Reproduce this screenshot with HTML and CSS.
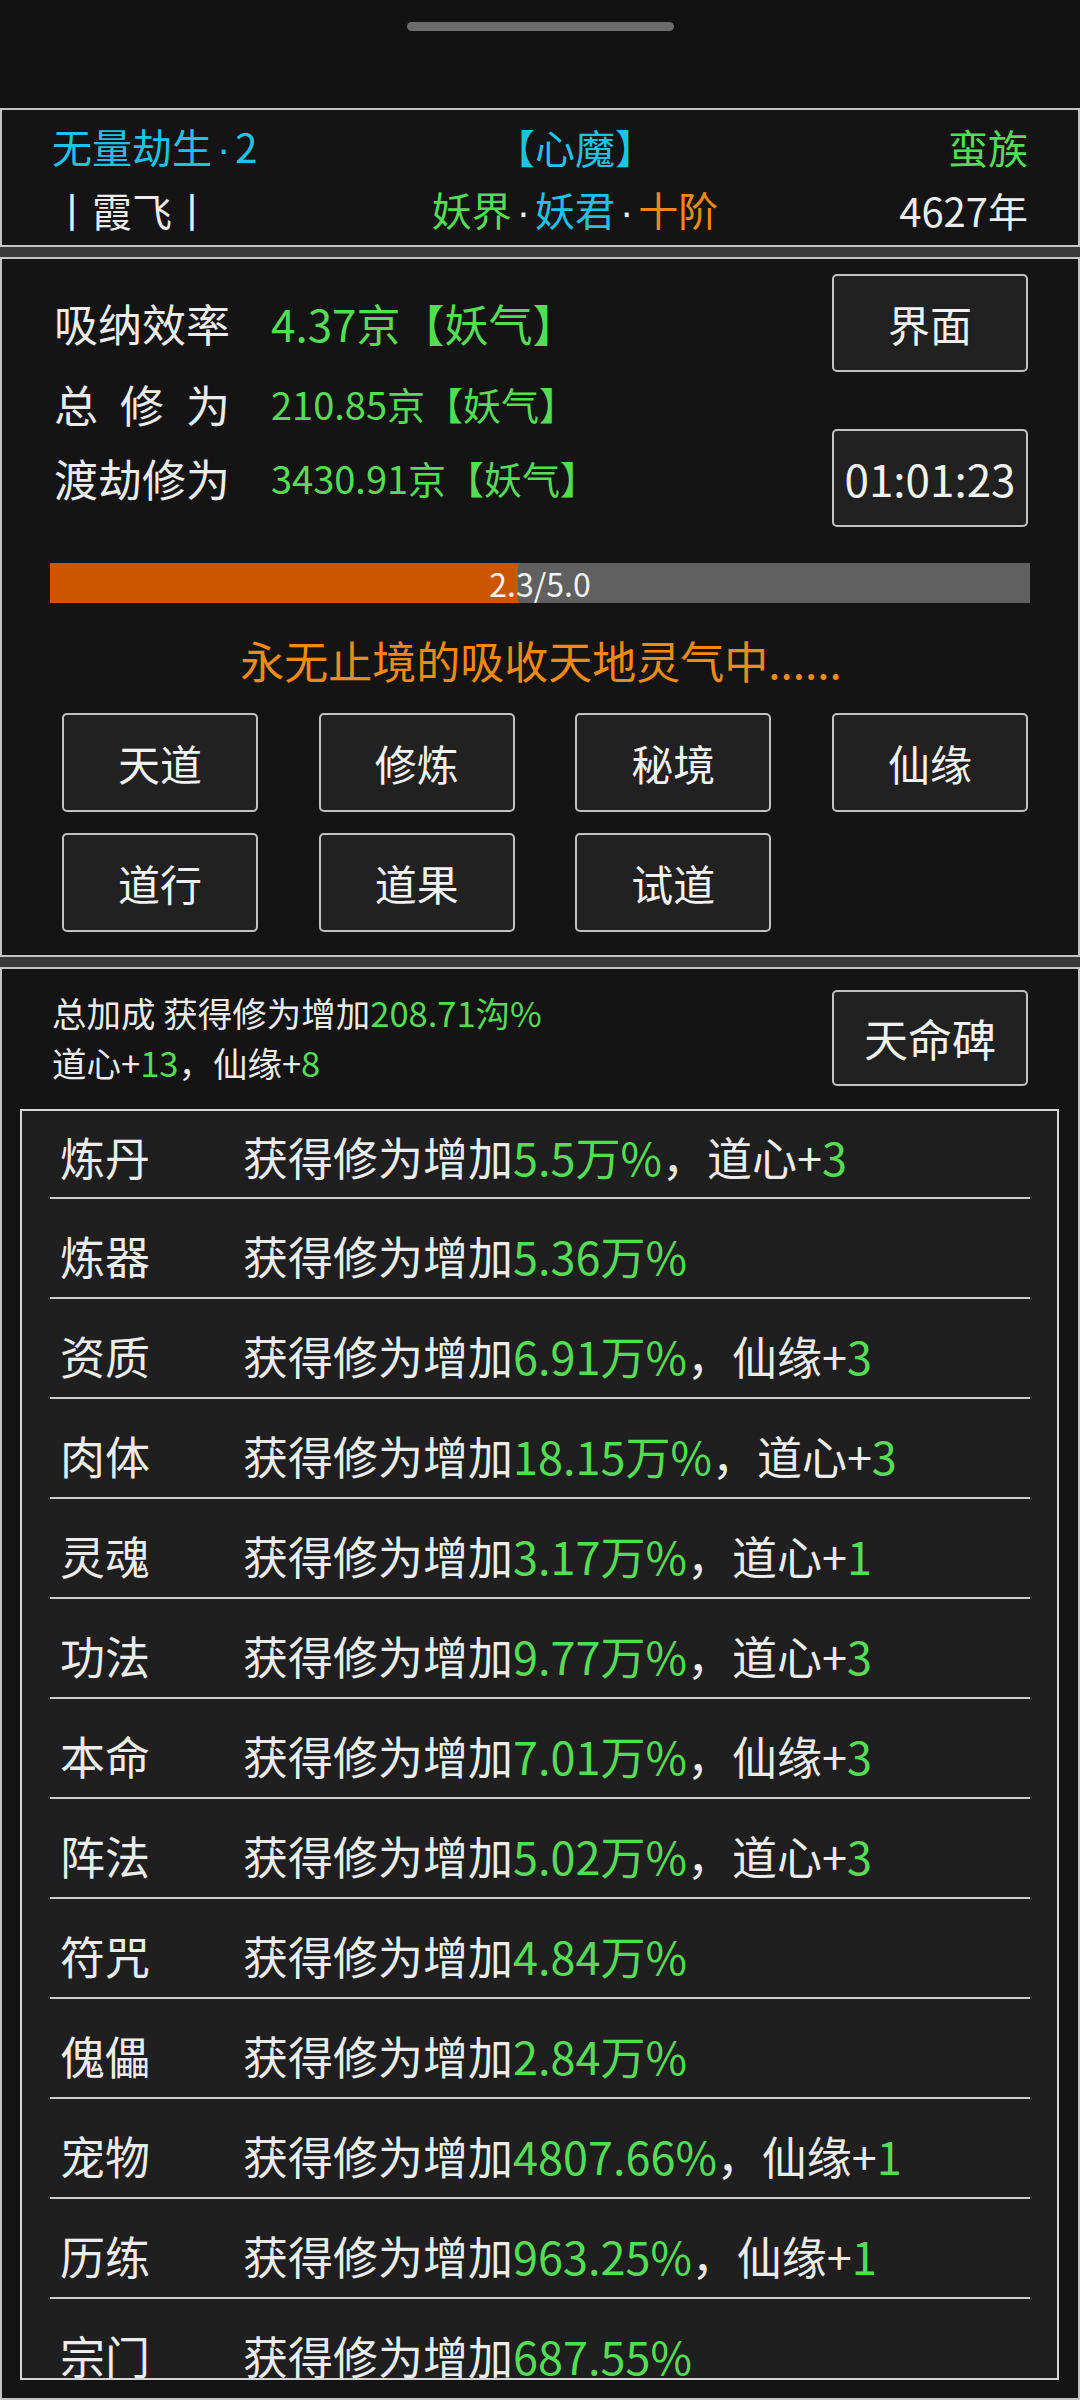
FILE: index.html
```html
<!DOCTYPE html>
<html lang="zh-CN">
<head>
<meta charset="utf-8">
<title>修仙</title>
<link rel="stylesheet" href="styles.css">
</head>
<body>
<div class="app">
  <div class="topbar"><div class="handle"></div></div>

  <section class="panel panel-info">
    <div class="info-grid">
      <div class="c-left cyan">无量劫生<span class="dot">·</span>2</div>
      <div class="c-mid cyan">【心魔】</div>
      <div class="c-right green">蛮族</div>
      <div class="c-left">丨霞飞丨</div>
      <div class="c-mid"><span class="green">妖界</span><span class="dot">·</span><span class="cyan">妖君</span><span class="dot">·</span><span class="orange">十阶</span></div>
      <div class="c-right">4627年</div>
    </div>
  </section>
  <div class="band"></div>

  <section class="panel panel-main">
    <div class="stats">
      <div class="stat-label">吸纳效率</div>
      <div class="stat-val big green">4.37京【妖气】</div>
      <div class="btn">界面</div>
      <div class="stat-label just mid">总 修 为</div>
      <div class="stat-val green mid">210.85京【妖气】</div>
      <div></div>
      <div class="stat-label">渡劫修为</div>
      <div class="stat-val green">3430.91京【妖气】</div>
      <div class="btn btn-time">01:01:23</div>
    </div>
    <div class="progress">
      <div class="progress-fill" style="width: 47.8%"></div>
      <div class="progress-text">2.3/5.0</div>
    </div>
    <div class="status orange">永无止境的吸收天地灵气中......</div>
    <div class="actions">
      <div class="btn">天道</div>
      <div class="btn">修炼</div>
      <div class="btn">秘境</div>
      <div class="btn">仙缘</div>
      <div class="btn">道行</div>
      <div class="btn">道果</div>
      <div class="btn">试道</div>
    </div>
  </section>
  <div class="band"></div>

  <section class="panel panel-bonus">
    <div class="bonus-head">
      <div class="bonus-text">
        <div>总加成 获得修为增加<span class="green">208.71沟%</span></div>
        <div>道心+<span class="green">13</span>，仙缘+<span class="green">8</span></div>
      </div>
      <div class="btn btn-tm">天命碑</div>
    </div>
    <div class="list">
      <div class="row"><div class="row-name">炼丹</div><div class="row-val">获得修为增加<span class="green">5.5万%</span>，道心+<span class="green">3</span></div></div>
      <div class="row"><div class="row-name">炼器</div><div class="row-val">获得修为增加<span class="green">5.36万%</span></div></div>
      <div class="row"><div class="row-name">资质</div><div class="row-val">获得修为增加<span class="green">6.91万%</span>，仙缘+<span class="green">3</span></div></div>
      <div class="row"><div class="row-name">肉体</div><div class="row-val">获得修为增加<span class="green">18.15万%</span>，道心+<span class="green">3</span></div></div>
      <div class="row"><div class="row-name">灵魂</div><div class="row-val">获得修为增加<span class="green">3.17万%</span>，道心+<span class="green">1</span></div></div>
      <div class="row"><div class="row-name">功法</div><div class="row-val">获得修为增加<span class="green">9.77万%</span>，道心+<span class="green">3</span></div></div>
      <div class="row"><div class="row-name">本命</div><div class="row-val">获得修为增加<span class="green">7.01万%</span>，仙缘+<span class="green">3</span></div></div>
      <div class="row"><div class="row-name">阵法</div><div class="row-val">获得修为增加<span class="green">5.02万%</span>，道心+<span class="green">3</span></div></div>
      <div class="row"><div class="row-name">符咒</div><div class="row-val">获得修为增加<span class="green">4.84万%</span></div></div>
      <div class="row"><div class="row-name">傀儡</div><div class="row-val">获得修为增加<span class="green">2.84万%</span></div></div>
      <div class="row"><div class="row-name">宠物</div><div class="row-val">获得修为增加<span class="green">4807.66%</span>，仙缘+<span class="green">1</span></div></div>
      <div class="row"><div class="row-name">历练</div><div class="row-val">获得修为增加<span class="green">963.25%</span>，仙缘+<span class="green">1</span></div></div>
      <div class="row"><div class="row-name">宗门</div><div class="row-val">获得修为增加<span class="green">687.55%</span></div></div>
    </div>
  </section>
</div>
</body>
</html>
```

FILE: styles.css
```css
* { box-sizing: border-box; }
html, body {
  margin: 0;
  padding: 0;
  width: 1080px;
  height: 2400px;
  overflow: hidden;
  background: #121212;
}
body {
  font-family: "Noto Sans CJK SC", sans-serif;
  color: #ececec;
}
.app {
  width: 1080px;
  height: 2400px;
  display: flex;
  flex-direction: column;
}
.cyan { color: #1fc2e6; }
.green { color: #55dc55; }
.orange { color: #f08a12; }

.topbar {
  height: 108px;
  flex: none;
  display: flex;
  justify-content: center;
  padding-top: 22px;
}
.handle {
  width: 267px;
  height: 9px;
  border-radius: 5px;
  background: #6b6b6b;
}

.panel {
  border: 2px solid #c4c4c4;
  background: #141414;
}
.band {
  height: 10px;
  background: #3a3a3a;
  flex: none;
}

/* panel 1 */
.panel-info {
  height: 139px;
  flex: none;
  padding: 6px 50px 0 50px;
}
.info-grid {
  display: grid;
  grid-template-columns: 320px 1fr 250px;
  grid-template-rows: 63px 63px;
  align-items: center;
  font-size: 40px;
  line-height: 63px;
  white-space: nowrap;
}
.dot {
  font-family: "Liberation Sans", sans-serif;
  padding: 0 5px;
  color: #ececec;
}
.cyan .dot { color: inherit; }
.c-mid { text-align: center; }
.c-right { text-align: right; }

/* panel 2 */
.panel-main {
  height: 700px;
  flex: none;
  padding: 15px 50px 0 52px;
}
.stats {
  display: grid;
  grid-template-columns: 176px 1fr 196px;
  grid-template-rows: 98px 57px 98px;
  column-gap: 41px;
  align-items: center;
  white-space: nowrap;
}
.stat-label {
  font-size: 44px;
  line-height: 56px;
}
.stat-label.just {
  text-align: justify;
  text-align-last: justify;
}
.mid { padding-top: 7px; }
.stat-val {
  font-size: 38px;
  line-height: 56px;
}
.stat-val.big { font-size: 44px; }

.btn {
  display: flex;
  align-items: center;
  justify-content: center;
  height: 98px;
  background: #212121;
  border: 2px solid #c2c2c2;
  border-radius: 5px;
  font-size: 42px;
  color: #f2f2f2;
}
.btn-time { font-size: 44px; }

.progress {
  position: relative;
  height: 40px;
  margin: 36px -2px 0 -4px;
  background: #606060;
}
.progress-fill {
  height: 100%;
  background: #cc5500;
}
.progress-text {
  position: absolute;
  inset: 0;
  text-align: center;
  font-size: 32px;
  line-height: 40px;
  color: #f4f4f4;
}
.status {
  margin-top: 27px;
  text-align: center;
  font-size: 44px;
  line-height: 60px;
  white-space: nowrap;
}
.actions {
  margin: 23px 0 0 8px;
  display: grid;
  grid-template-columns: repeat(4, 196px);
  grid-auto-rows: 99px;
  justify-content: space-between;
  row-gap: 21px;
}
.actions .btn { height: 99px; }

/* panel 3 */
.panel-bonus {
  flex: 1;
  min-height: 0;
  padding: 18px 19px 18px 18px;
  display: flex;
  flex-direction: column;
}
.bonus-head {
  display: flex;
  justify-content: space-between;
  align-items: flex-start;
  padding: 0 31px 0 32px;
  height: 100px;
  flex: none;
}
.bonus-text {
  font-size: 34.5px;
  line-height: 50px;
  white-space: nowrap;
}
.btn-tm {
  width: 196px;
  height: 96px;
  margin-top: 3px;
  font-size: 44px;
}
.list {
  margin-top: 22px;
  flex: 1;
  min-height: 0;
  overflow: hidden;
  background: #1f1f1f;
  border: 2px solid #d6d6d6;
  padding: 0 27px 0 28px;
}
.row {
  display: flex;
  height: 100px;
  padding-top: 31px;
  border-bottom: 2px solid #cfcfcf;
  font-size: 45px;
  line-height: 52px;
  white-space: nowrap;
}
.row:first-child {
  height: 88px;
  padding-top: 20px;
}
.row-name {
  width: 193px;
  padding-left: 10px;
  flex: none;
}
```
